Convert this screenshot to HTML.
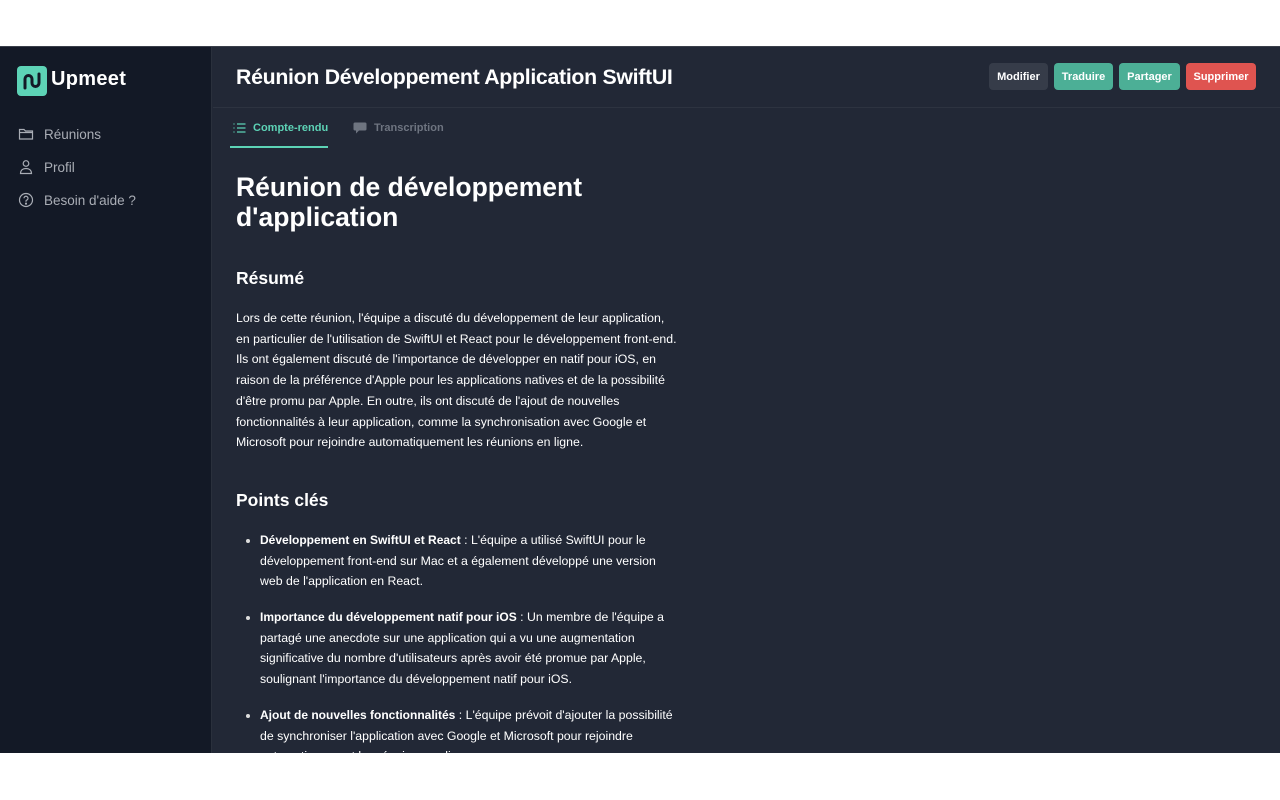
<!DOCTYPE html>
<html><head><meta charset="utf-8"><style>
*{margin:0;padding:0;box-sizing:border-box}
body{width:1280px;height:800px;background:#fff;font-family:"Liberation Sans",Arial,sans-serif;position:relative;overflow:hidden}
#app{position:absolute;top:46px;left:0;width:1280px;height:707px;background:#222836;overflow:hidden;border-top:1px solid #3a3f4a}
#side{position:absolute;left:0;top:0;width:212px;height:100%;background:#131926;border-right:1px solid #2a303c}
.logo{position:absolute;left:17px;top:19px;width:30px;height:30px;background:#5dd3b6;border-radius:4px}
.brand{position:absolute;left:51px;top:21px;color:#fff;font-weight:bold;font-size:20px;letter-spacing:0.3px}
.nav{position:absolute;left:18px;color:#a9adb5;font-size:13.5px;display:flex;align-items:center}
.nav svg{margin-right:10px}
.hdr{position:absolute;left:213px;top:0;right:0;height:61px;border-bottom:1px solid #2d3340}
.title{position:absolute;left:236px;top:18px;color:#fff;font-weight:bold;font-size:21.3px;letter-spacing:-0.3px}
.btn{position:absolute;top:16px;height:27px;border-radius:4px;color:#fff;font-weight:bold;font-size:11px;line-height:28px;text-align:center}
.tab{position:absolute;top:75px;font-size:11px;font-weight:bold;display:flex;align-items:center}
.c{position:absolute;left:236px;color:#fff;white-space:nowrap}
.p{font-size:12.3px;line-height:20.7px}
h1{font-size:26.5px;line-height:29.5px;font-weight:bold}
h2{font-size:17.5px;font-weight:bold}
.li{position:absolute;left:260px;color:#fff;font-size:12.3px;line-height:20.7px;white-space:nowrap}
.li b{font-size:12px}
.li:before{content:"";position:absolute;left:-14px;top:9px;width:4px;height:4px;border-radius:50%;background:#ddd}
</style></head><body>
<div id="app">
<div id="side">
<div class="logo"><svg width="30" height="30" viewBox="0 0 30 30"><path d="M8 22 V13 a3.5 3.5 0 0 1 7 0 V17 a3.5 3.5 0 0 0 7 0 V8" fill="none" stroke="#131926" stroke-width="3" stroke-linecap="round"/></svg></div>
<div class="brand">Upmeet</div>
<div class="nav" style="top:79px"><svg width="16" height="16" viewBox="0 0 16 16" fill="none" stroke="#a9adb5" stroke-width="1.2"><path d="M1.5 3.5h4.5l1.5 1.5h7v8h-13z M1.5 6.5h13"/></svg>Réunions</div>
<div class="nav" style="top:112px"><svg width="16" height="16" viewBox="0 0 16 16" fill="none" stroke="#a9adb5" stroke-width="1.2"><circle cx="8" cy="4.5" r="2.8"/><path d="M2.5 14.5c0-3.5 2.5-5 5.5-5s5.5 1.5 5.5 5z"/></svg>Profil</div>
<div class="nav" style="top:145px"><svg width="16" height="16" viewBox="0 0 16 16" fill="none" stroke="#a9adb5" stroke-width="1.2"><circle cx="8" cy="8" r="6.5"/><path d="M6 6.3a2 2 0 1 1 2.5 1.9c-.4.2-.5.5-.5 1v.6"/><circle cx="8" cy="11.6" r=".5" fill="#a9adb5"/></svg>Besoin d'aide ?</div>
</div>
<div class="hdr"></div>
<div class="title">Réunion Développement Application SwiftUI</div>
<div class="btn" style="left:989px;width:59px;background:#363c49">Modifier</div>
<div class="btn" style="left:1054px;width:59px;background:#4caf96">Traduire</div>
<div class="btn" style="left:1119px;width:61px;background:#4caf96">Partager</div>
<div class="btn" style="left:1186px;width:70px;background:#df5450">Supprimer</div>
<div class="tab" style="left:233px;color:#5dd3b6"><svg width="13" height="12" viewBox="0 0 13 12" fill="none" stroke="#5dd3b6" stroke-width="1.3"><path d="M0.5 2h1M0.5 6h1M0.5 10h1M4 2h8.5M4 6h8.5M4 10h8.5"/></svg><span style="margin-left:7px">Compte-rendu</span></div>
<div style="position:absolute;left:230px;top:99px;width:98px;height:2px;background:#5dd3b6"></div>
<div class="tab" style="left:353px;color:#6e7480"><svg width="14" height="12" viewBox="0 0 14 12"><path d="M2 0.5h10a1.5 1.5 0 0 1 1.5 1.5v5a1.5 1.5 0 0 1-1.5 1.5h-6l-3 3v-3h-1A1.5 1.5 0 0 1 .5 7V2A1.5 1.5 0 0 1 2 .5z" fill="#6e7480"/></svg><span style="margin-left:7px">Transcription</span></div>
<div class="c" style="top:126px"><h1>Réunion de développement<br>d'application</h1></div>
<div class="c" style="top:221px"><h2>Résumé</h2></div>
<div class="c p" style="top:261px">Lors de cette réunion, l'équipe a discuté du développement de leur application,<br>en particulier de l'utilisation de SwiftUI et React pour le développement front-end.<br>Ils ont également discuté de l'importance de développer en natif pour iOS, en<br>raison de la préférence d'Apple pour les applications natives et de la possibilité<br>d'être promu par Apple. En outre, ils ont discuté de l'ajout de nouvelles<br>fonctionnalités à leur application, comme la synchronisation avec Google et<br>Microsoft pour rejoindre automatiquement les réunions en ligne.</div>
<div class="c" style="top:443px"><h2>Points clés</h2></div>
<div class="li" style="top:483px"><b>Développement en SwiftUI et React</b> : L'équipe a utilisé SwiftUI pour le<br>développement front-end sur Mac et a également développé une version<br>web de l'application en React.</div>
<div class="li" style="top:560px"><b>Importance du développement natif pour iOS</b> : Un membre de l'équipe a<br>partagé une anecdote sur une application qui a vu une augmentation<br>significative du nombre d'utilisateurs après avoir été promue par Apple,<br>soulignant l'importance du développement natif pour iOS.</div>
<div class="li" style="top:658px"><b>Ajout de nouvelles fonctionnalités</b> : L'équipe prévoit d'ajouter la possibilité<br>de synchroniser l'application avec Google et Microsoft pour rejoindre<br>automatiquement les réunions en ligne.</div>
</div>
</body></html>
